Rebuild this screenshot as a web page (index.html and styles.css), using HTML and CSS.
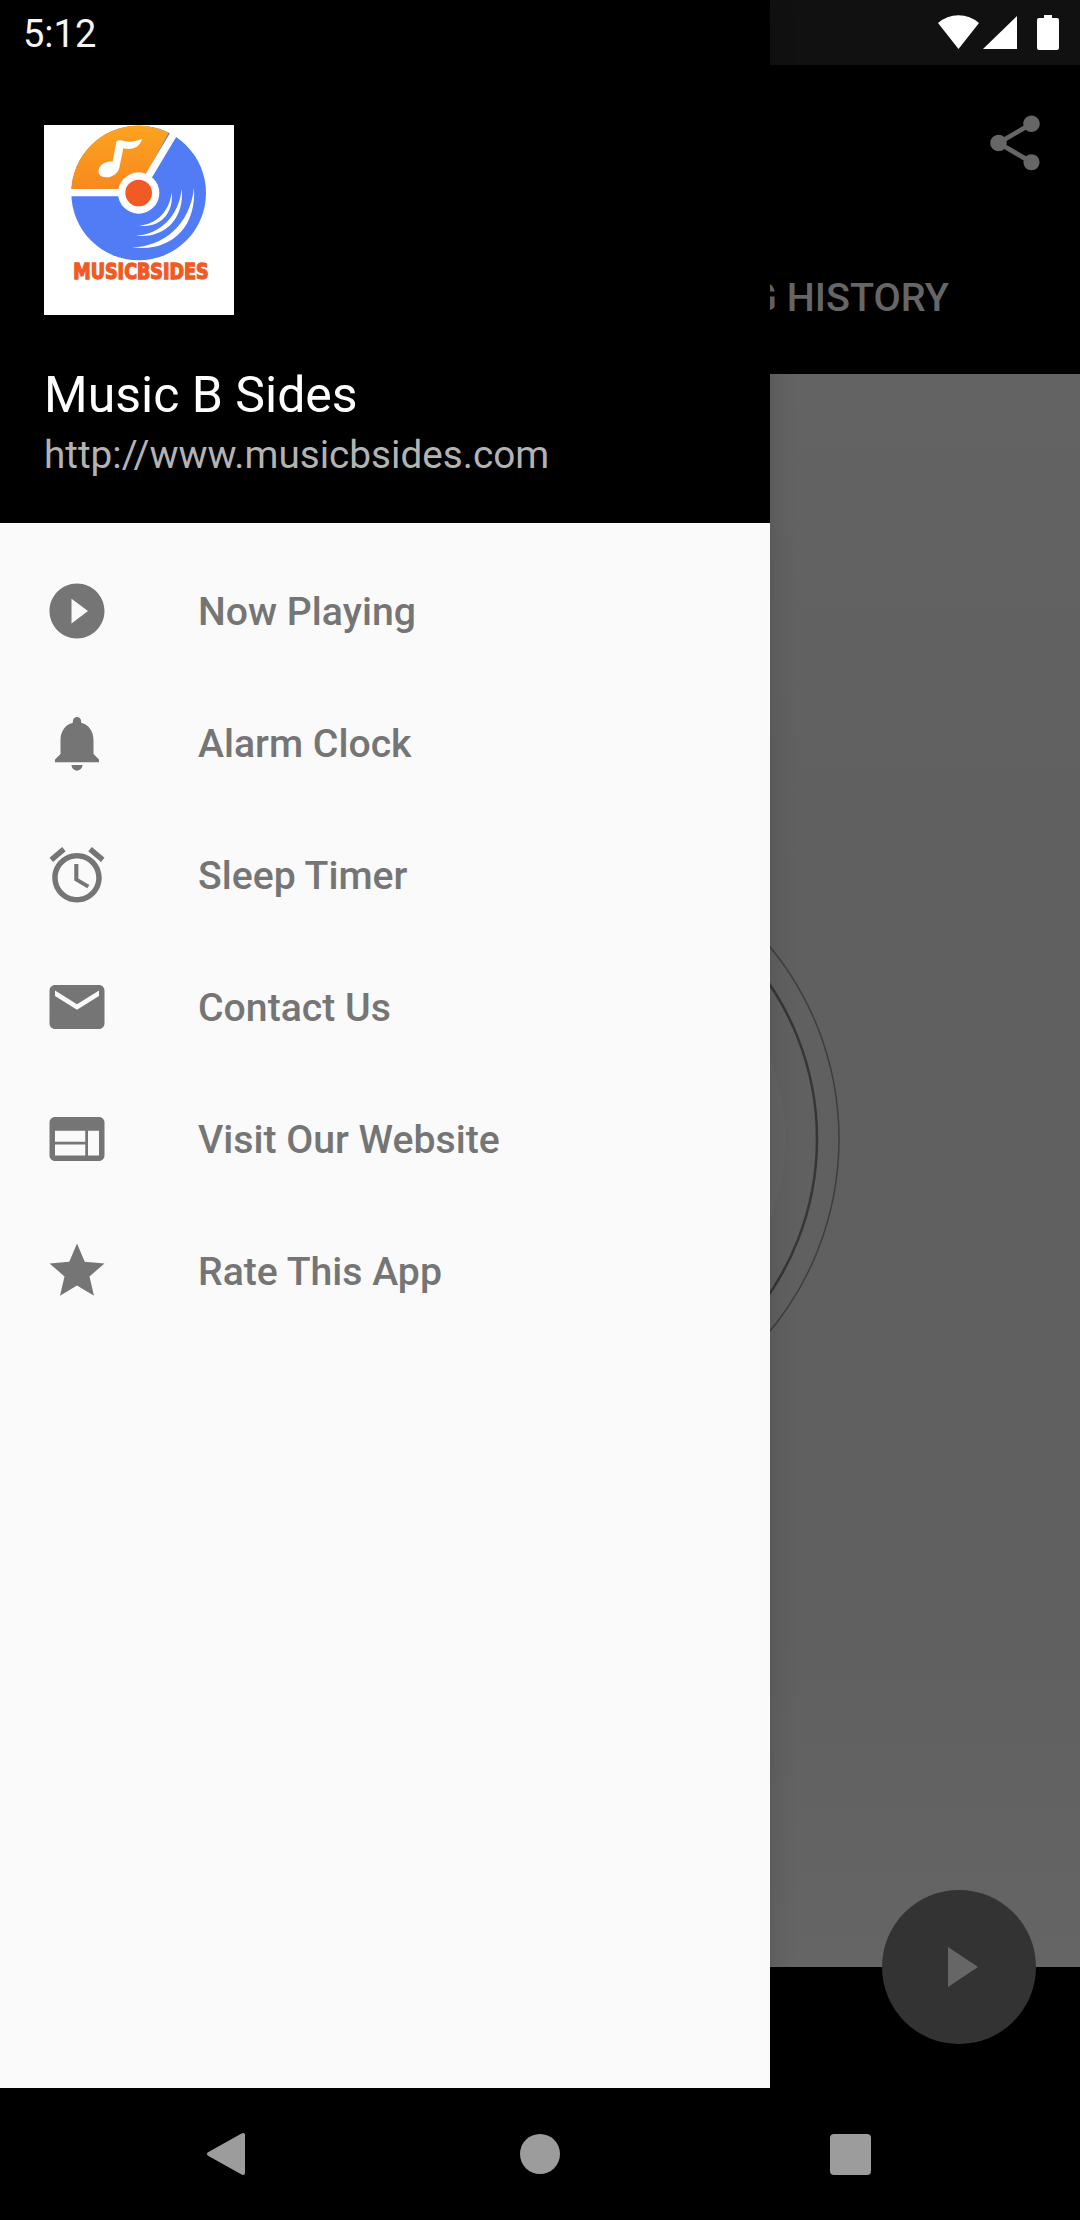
FILE: index.html
```html
<!DOCTYPE html>
<html lang="en">
<head>
  <meta charset="UTF-8">
  <title>Music B Sides</title>
  <link rel="stylesheet" href="styles.css">
</head>
<body>
  <div class="app">
    <div class="status-bar">
      <svg class="status-icons" viewBox="0 0 121 40" width="121" height="40">
        <path d="M0 8 A31 31 0 0 1 41 8 L20.5 34 Z" />
        <path d="M45 34 L79 1 V34 Z" />
        <path d="M99 5 a2 2 0 0 1 2-2 h5 v-3 h8 v3 h5 a2 2 0 0 1 2 2 v28 a2 2 0 0 1 -2 2 h-18 a2 2 0 0 1 -2-2 Z" />
      </svg>
    </div>
    <div class="toolbar">
      <div class="action-row">
        <svg class="icon share-icon" viewBox="0 0 24 24"><path d="M18 16.08c-.76 0-1.44.3-1.96.77L8.91 12.7c.05-.23.09-.46.09-.7s-.04-.47-.09-.7l7.05-4.11c.54.5 1.25.81 2.04.81 1.66 0 3-1.34 3-3s-1.34-3-3-3-3 1.34-3 3c0 .24.04.47.09.7L8.04 9.81C7.5 9.31 6.79 9 6 9c-1.66 0-3 1.34-3 3s1.34 3 3 3c.79 0 1.5-.31 2.04-.81l7.12 4.16c-.05.21-.08.43-.08.65 0 1.61 1.31 2.92 2.92 2.92 1.61 0 2.92-1.31 2.92-2.92s-1.31-2.92-2.92-2.92z"/></svg>
      </div>
      <div class="tab-row"><span class="tab-label">SONG HISTORY</span></div>
    </div>
    <div class="content">
      <svg class="disc" viewBox="0 0 1080 1593">
        <circle class="disc-core" cx="554" cy="765" r="231" />
        <circle class="disc-ring-inner" cx="541" cy="765" r="276" />
        <circle class="disc-ring-outer" cx="537" cy="765" r="302" />
      </svg>
    </div>
    <div class="player-bar"></div>
    <div class="nav-bar">
      <svg class="nav-back" viewBox="0 0 40 44"><path d="M3 22 L37 3 V41 Z" /></svg>
      <div class="nav-home"></div>
      <div class="nav-recent"></div>
    </div>
  </div>

  <div class="fab">
    <svg viewBox="0 0 30 40" width="30" height="40"><path d="M0 0 L30 20 L0 40 Z" /></svg>
  </div>

  <aside class="drawer">
    <header class="drawer-header">
      <div class="time">5:12</div>
      <svg class="logo" viewBox="42 30 570 570">
        <defs>
          <linearGradient id="orange" x1="0" y1="0" x2="0" y2="1">
            <stop offset="0" stop-color="#fca41f" />
            <stop offset="1" stop-color="#f8881f" />
          </linearGradient>
        </defs>
        <rect x="42" y="30" width="570" height="570" fill="#fff" />
        <circle cx="326" cy="234" r="202" fill="#527bf6" />
        <path d="M124 222 A202 202 0 0 1 416 53 L352 172 L266 222 Z" fill="url(#orange)" />
        <path d="M110 233 H326 L434 52" fill="none" stroke="#fff" stroke-width="22" />
        <circle cx="326" cy="234" r="62" fill="#fff" />
        <circle cx="326" cy="234" r="40" fill="#f15a24" />
        <path d="M328 332 C380 328 418 290 425 232 C432 296 390 340 328 332 Z" fill="#fff" />
        <path d="M318 362 C390 358 446 305 455 222 C464 312 402 372 318 362 Z" fill="#fff" />
        <path d="M306 397 C400 395 480 330 492 218 C500 340 420 412 306 397 Z" fill="#fff" />
        <path d="M206 165 C208 150 226 138 248 140 L258 86 C258 78 264 74 272 76 C290 82 312 82 336 72 C330 96 308 106 280 100 L268 158 C264 178 240 190 222 186 C210 184 204 176 206 165 Z" fill="#fff" />
        <text class="logo-text" x="130" y="493" textLength="406" lengthAdjust="spacingAndGlyphs">MUSICBSIDES</text>
      </svg>
      <div class="app-name">Music B Sides</div>
      <div class="app-url">http://www.musicbsides.com</div>
    </header>
    <nav class="menu">
      <div class="menu-item">
        <svg class="icon" viewBox="0 0 24 24"><path d="M12 2C6.48 2 2 6.48 2 12s4.48 10 10 10 10-4.48 10-10S17.52 2 12 2zm-2 14.5v-9l6 4.5-6 4.5z"/></svg>
        <span class="menu-label">Now Playing</span>
      </div>
      <div class="menu-item">
        <svg class="icon" viewBox="0 0 24 24"><path d="M12 22c1.1 0 2-.9 2-2h-4c0 1.1.89 2 2 2zm6-6v-5c0-3.07-1.64-5.64-4.5-6.32V4c0-.83-.67-1.5-1.5-1.5s-1.5.67-1.5 1.5v.68C7.63 5.36 6 7.92 6 11v5l-2 2v1h16v-1l-2-2z"/></svg>
        <span class="menu-label">Alarm Clock</span>
      </div>
      <div class="menu-item">
        <svg class="icon" viewBox="0 0 24 24"><path d="M22 5.72l-4.6-3.86-1.29 1.53 4.6 3.86L22 5.72zM7.88 3.39L6.6 1.86 2 5.71l1.29 1.53 4.59-3.85zM12.5 8H11v6l4.75 2.85.75-1.23-4-2.37V8zM12 4c-4.97 0-9 4.03-9 9s4.02 9 9 9c4.97 0 9-4.03 9-9s-4.03-9-9-9zm0 16c-3.87 0-7-3.13-7-7s3.13-7 7-7 7 3.13 7 7-3.13 7-7 7z"/></svg>
        <span class="menu-label">Sleep Timer</span>
      </div>
      <div class="menu-item">
        <svg class="icon" viewBox="0 0 24 24"><path d="M20 4H4c-1.1 0-1.99.9-1.99 2L2 18c0 1.1.9 2 2 2h16c1.1 0 2-.9 2-2V6c0-1.1-.9-2-2-2zm0 4l-8 5-8-5V6l8 5 8-5v2z"/></svg>
        <span class="menu-label">Contact Us</span>
      </div>
      <div class="menu-item">
        <svg class="icon" viewBox="0 0 24 24"><path d="M20 4H4c-1.1 0-1.99.9-1.99 2L2 18c0 1.1.9 2 2 2h16c1.1 0 2-.9 2-2V6c0-1.1-.9-2-2-2zm-5 14H4v-4h11v4zm0-5H4V9h11v4zm5 5h-4V9h4v9z"/></svg>
        <span class="menu-label">Visit Our Website</span>
      </div>
      <div class="menu-item">
        <svg class="icon" viewBox="0 0 24 24"><path d="M12 17.27L18.18 21l-1.64-7.03L22 9.24l-7.19-.61L12 2 9.19 8.63 2 9.24l5.46 4.73L5.82 21z"/></svg>
        <span class="menu-label">Rate This App</span>
      </div>
    </nav>
  </aside>
</body>
</html>
```

FILE: styles.css
```css
* {
  box-sizing: border-box;
}

body {
  position: relative;
  width: 1080px;
  height: 2220px;
  margin: 0;
  overflow: hidden;
  background-color: #000;
  font-family: Roboto, sans-serif;
}

.app {
  display: flex;
  flex-direction: column;
  height: 100%;
}

.icon {
  display: block;
  flex: none;
  width: 66px;
  height: 66px;
  fill: #757575;
}

/* status bar, dimmed by the open drawer */
.status-bar {
  display: flex;
  justify-content: flex-end;
  height: 65px;
  padding: 15px 21px 0 0;
  background-color: #111;
}

.status-icons {
  display: block;
  fill: #fff;
}

.toolbar {
  height: 309px;
  background-color: #000;
}

.action-row {
  display: flex;
  justify-content: flex-end;
  padding: 45px 32px 0 0;
}

.share-icon {
  fill: #666;
}

.tab-row {
  display: flex;
  justify-content: flex-end;
  margin-top: 97px;
  padding-right: 131px;
}

.tab-label {
  font-size: 39.6px;
  font-weight: 500;
  line-height: 50px;
  white-space: nowrap;
  color: #666;
}

.content {
  position: relative;
  flex: 1;
  overflow: hidden;
  background: linear-gradient(#636363, #606060 30%, #606060 80%, #656565);
}

.disc {
  position: absolute;
  top: 0;
  left: 0;
  width: 100%;
  height: 100%;
  fill: none;
}

.disc-core {
  fill: #636363;
}

.disc-ring-inner {
  stroke: #363636;
  stroke-width: 2.5;
}

.disc-ring-outer {
  stroke: #3e3e3e;
  stroke-width: 1.5;
}

.player-bar {
  height: 121px;
  background-color: #000;
}

.nav-bar {
  display: flex;
  align-items: center;
  height: 132px;
  padding-left: 206px;
}

.nav-back {
  width: 40px;
  height: 44px;
  fill: #9c9c9c;
  stroke: #9c9c9c;
  stroke-width: 4;
  stroke-linejoin: round;
}

.nav-home {
  width: 40px;
  height: 40px;
  margin: 0 270px 0 274px;
  border-radius: 50%;
  background-color: #9c9c9c;
}

.nav-recent {
  width: 41px;
  height: 41px;
  border-radius: 4px;
  background-color: #9c9c9c;
}

.fab {
  position: absolute;
  top: 1890px;
  left: 882px;
  display: flex;
  align-items: center;
  justify-content: center;
  width: 154px;
  height: 154px;
  padding-left: 8px;
  border-radius: 50%;
  background-color: #333;
  fill: #666;
}

/* navigation drawer */
.drawer {
  position: absolute;
  top: 0;
  left: 0;
  width: 770px;
  height: 2088px;
  background-color: #fafafa;
  box-shadow: 0 0 24px rgba(0, 0, 0, 0.15);
}

.drawer-header {
  height: 523px;
  padding-left: 44px;
  background-color: #000;
}

.time {
  height: 65px;
  margin-left: -21px;
  font-size: 38px;
  line-height: 68px;
  color: #f5f5f5;
}

.logo {
  display: block;
  width: 190px;
  height: 190px;
  margin-top: 60px;
}

.logo-text {
  font-family: "DejaVu Sans", sans-serif;
  font-size: 62px;
  font-weight: 700;
  fill: #f15a24;
  stroke: #f15a24;
  stroke-width: 4;
}

.app-name {
  margin-top: 52px;
  font-size: 50px;
  line-height: 56px;
  color: #fff;
}

.app-url {
  margin-top: 7px;
  font-size: 38.7px;
  line-height: 50px;
  color: #b3b3b3;
}

.menu {
  padding-top: 21.5px;
}

.menu-item {
  display: flex;
  align-items: center;
  gap: 88px;
  height: 132px;
  padding-left: 44px;
}

.menu-label {
  margin-top: 3px;
  font-size: 39.2px;
  font-weight: 500;
  color: #757575;
}
```
